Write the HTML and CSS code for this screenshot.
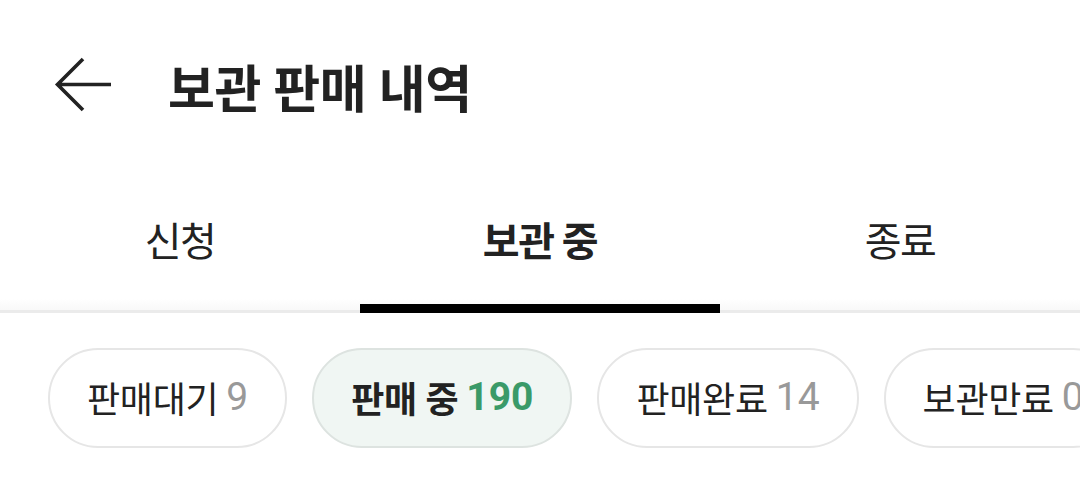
FILE: index.html
```html
<!DOCTYPE html>
<html lang="ko">
<head>
    <meta charset="UTF-8">
    <meta name="viewport" content="width=device-width, initial-scale=1.0">
    <title>보관 판매 내역</title>
    <link rel="stylesheet" href="styles.css">
</head>
<body>
    <header class="top-bar">
        <button class="back-button" aria-label="뒤로">
            <svg width="60" height="56" viewBox="0 0 60 56">
                <path d="M57 27.5H3.5M29 2L3.5 27.5L29 53" fill="none" stroke="#222" stroke-width="3.6"/>
            </svg>
        </button>
        <h1>보관 판매 내역</h1>
    </header>

    <nav class="tabs">
        <div class="tab">신청</div>
        <div class="tab active">보관 중</div>
        <div class="tab">종료</div>
    </nav>

    <div class="chips">
        <div class="chip">판매대기 <span class="count">9</span></div>
        <div class="chip selected">판매 중 <span class="count">190</span></div>
        <div class="chip">판매완료 <span class="count">14</span></div>
        <div class="chip">보관만료 <span class="count">0</span></div>
    </div>
</body>
</html>
```

FILE: styles.css
```css
/* Global Styling */
body {
    margin: 0;
    padding: 0;
    font-family: Roboto, "Noto Sans CJK KR", sans-serif;
    background-color: #fff;
    color: #222;
    overflow: hidden;
}

/* Header */
.top-bar {
    display: flex;
    align-items: center;
    height: 172px;
    padding-left: 54px;
    box-sizing: border-box;
}

.back-button {
    display: flex;
    padding: 0;
    margin: 0 54px 2px 0;
    background: none;
    border: none;
}

.top-bar h1 {
    margin: 0;
    font-size: 51px;
    font-weight: 700;
    letter-spacing: -0.4px;
}

/* Tabs */
.tabs {
    display: flex;
    height: 141px;
    box-shadow: inset 0 -3px 0 #ebebeb;
    background: linear-gradient(to bottom, #fff 90%, #f7f7f7);
}

.tab {
    flex: 1;
    position: relative;
    display: flex;
    align-items: center;
    justify-content: center;
    padding-bottom: 8px;
    font-size: 40px;
    letter-spacing: -1.5px;
    color: #222;
}

.tab.active {
    font-weight: 700;
}

.tab.active::after {
    content: "";
    position: absolute;
    left: 0;
    right: 0;
    bottom: 0;
    height: 9px;
    background-color: #000;
}

/* Filter chips */
.chips {
    display: flex;
    gap: 25px;
    padding: 35px 0 0 48px;
    white-space: nowrap;
    overflow: hidden;
}

.chip {
    flex-shrink: 0;
    display: flex;
    align-items: center;
    gap: 8px;
    height: 100px;
    padding: 0 37px 2px;
    box-sizing: border-box;
    border: 2px solid #e6e6e6;
    border-radius: 50px;
    font-size: 36px;
    letter-spacing: -0.3px;
    color: #222;
}

.chip .count {
    font-size: 39px;
    letter-spacing: 0;
    color: #999;
}

.chip.selected {
    background-color: #f0f6f3;
    border-color: #dde3e0;
    font-weight: 700;
}

.chip.selected .count {
    color: #3a9a68;
}
```
